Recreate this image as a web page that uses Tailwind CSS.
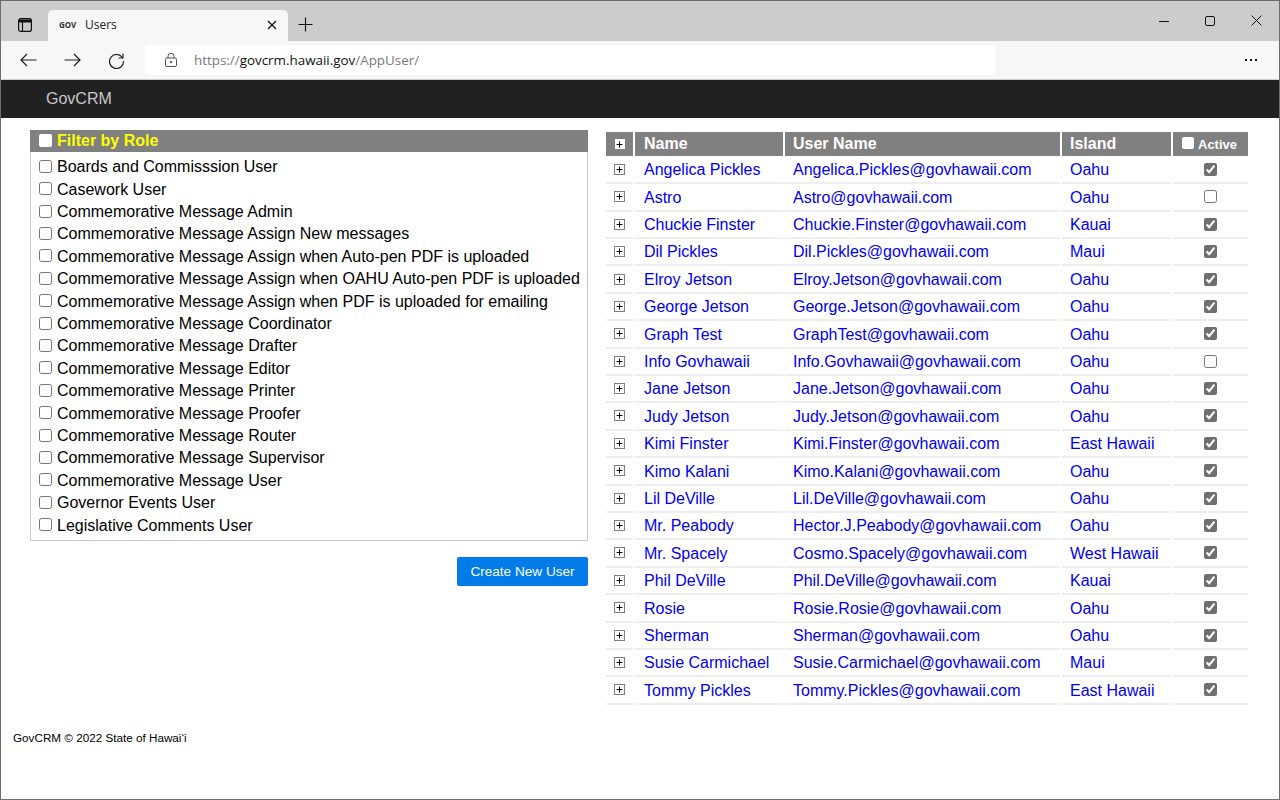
<!DOCTYPE html>
<html lang="en">
    <head>
        <meta charset="UTF-8" />
        <title>Users</title>
        <script src="https://cdn.jsdelivr.net/npm/@tailwindcss/browser@4"></script>
    </head>
    <body class="bg-white overflow-hidden font-['Liberation_Sans',Arial,sans-serif]">
        <div class="w-[1280px] h-[800px] border border-[#6e6e6e] flex flex-col text-black">
            <!-- Browser tab strip -->
            <div class="h-[40px] bg-[#cccccc] flex items-end relative shrink-0">
                <div class="w-[47px] h-[31px] flex items-center justify-center pb-[1px]">
                    <svg width="16" height="16" viewBox="0 0 16 16" fill="none" stroke="#111" stroke-width="1.2"><rect x="1.6" y="1.6" width="12.8" height="12.8" rx="2.2"/><path d="M1.6 5h12.8M5.5 5v9.4"/><path d="M2 2.5h12v2.5H2z" fill="#111" stroke="none"/></svg>
                </div>
                <div class="w-[240px] h-[31px] bg-[#f7f7f7] rounded-t-[5px] flex items-center pl-[11px] pr-[11px] pb-[1px]">
                    <span class="text-[8px] font-bold text-[#333] w-[26px] font-['Noto_Sans',sans-serif]">GOV</span>
                    <span class="text-[12px] text-[#222] font-['Open_Sans',sans-serif]">Users</span>
                    <svg class="ml-auto" width="10" height="10" viewBox="0 0 10 10" stroke="#111" stroke-width="1.3"><path d="M1 1l8 8M9 1l-8 8"/></svg>
                </div>
                <div class="w-[35px] h-[31px] flex items-center justify-center pb-[2px]">
                    <svg width="15" height="15" viewBox="0 0 15 15" stroke="#111" stroke-width="1.1"><path d="M7.5 0.5v14M0.5 7.5h14"/></svg>
                </div>
                <div class="ml-auto flex items-center h-[40px] pb-[1px]">
                    <svg class="mr-[36px]" width="10" height="10" viewBox="0 0 10 10" stroke="#111" stroke-width="1"><path d="M0 5.5h10"/></svg>
                    <svg class="mr-[36px]" width="10" height="10" viewBox="0 0 10 10" fill="none" stroke="#111" stroke-width="1"><rect x="0.5" y="0.5" width="9" height="9" rx="1.5"/></svg>
                    <svg class="mr-[17px]" width="11" height="11" viewBox="0 0 11 11" stroke="#111" stroke-width="1"><path d="M0.5 0.5l10 10M10.5 0.5l-10 10"/></svg>
                </div>
            </div>
            <!-- Browser toolbar -->
            <div class="h-[39px] bg-[#f7f7f7] border-b border-[#cfcfcf] flex items-center shrink-0">
                <div class="w-[144px] flex items-center pl-[19px] gap-[27px]">
                    <svg width="17" height="14" viewBox="0 0 17 14" fill="none" stroke="#222" stroke-width="1.2"><path d="M16.5 7H1M7 1L1 7l6 6"/></svg>
                    <svg width="17" height="14" viewBox="0 0 17 14" fill="none" stroke="#222" stroke-width="1.2"><path d="M0.5 7H16M10 1l6 6-6 6"/></svg>
                    <svg width="17" height="17" viewBox="0 0 17 17" fill="none" stroke="#222" stroke-width="1.2"><path d="M14.6 6A7 7 0 1 0 15.5 9"/><path d="M15 1.5V6h-4.5"/></svg>
                </div>
                <div class="w-[850px] h-[30px] bg-white rounded-[4px] flex items-center pl-[20px] text-[13.4px] font-['Open_Sans',sans-serif] text-[#7a7a7a]">
                    <svg class="mr-[17px]" width="12" height="14" viewBox="0 0 12 14" fill="none" stroke="#555" stroke-width="1"><rect x="0.5" y="5" width="11" height="8.5" rx="1.5"/><path d="M3 5V3.2a3 3 0 0 1 6 0V5"/><circle cx="6" cy="9.2" r="0.8" fill="#555"/></svg>
                    <span>https://</span><span class="text-[#111]">govcrm.hawaii.gov</span><span>/AppUser/</span>
                </div>
                <div class="ml-auto mr-[22px] flex gap-[3px]">
                    <span class="w-[2px] h-[2px] bg-[#111]"></span><span class="w-[2px] h-[2px] bg-[#111]"></span><span class="w-[2px] h-[2px] bg-[#111]"></span>
                </div>
            </div>
            <!-- Navbar -->
            <div class="h-[38px] bg-[#212121] flex items-center pl-[45px] text-[16px] text-white/75 shrink-0">GovCRM</div>

            <!-- Page -->
            <div class="flex items-start pl-[29px] pt-[12px]">
                <!-- Role filter -->
                <div class="w-[558px]">
                    <div class="h-[22px] bg-[#808080] flex items-center pl-[9px] gap-[5px] text-[16px] font-bold">
                        <input type="checkbox" class="m-0 w-[13px] h-[13px] appearance-none bg-white rounded-[2px] -mt-[1px]" />
                        <span class="text-[#ffff00]">Filter by Role</span>
                    </div>
                    <div id="roles" class="border border-t-0 border-[#cccccc] h-[389px] pl-[8px] pt-[4px] text-[16px]"></div>
                    <div class="flex justify-end mt-[16px]">
                        <button class="h-[29px] w-[131px] bg-[#007be8] rounded-[2px] text-white text-[13.6px] pt-[1px]">Create New User</button>
                    </div>
                </div>
                <!-- Users table -->
                <div class="ml-[18px] mt-[2px] w-[642px]">
                    <div class="grid grid-cols-[27px_148px_275px_109px_75px] gap-x-[2px] h-[24px] text-white font-bold text-[16px]">
                        <div class="bg-[#808080] flex items-center justify-center">
                            <span class="w-[10px] h-[10px] bg-white flex items-center justify-center"><svg width="7" height="7" viewBox="0 0 7 7" stroke="#000" stroke-width="1"><path d="M3.5 0.5v6M0.5 3.5h6"/></svg></span>
                        </div>
                        <div class="bg-[#808080] flex items-center pl-[9px]">Name</div>
                        <div class="bg-[#808080] flex items-center pl-[8px]">User Name</div>
                        <div class="bg-[#808080] flex items-center pl-[8px]">Island</div>
                        <div class="bg-[#808080] flex items-center pl-[9px] gap-[4px] text-[13px]">
                            <input type="checkbox" class="m-0 w-[12px] h-[12px] appearance-none bg-white rounded-[2px] -mt-[3px]" />
                            <span class="mt-[1px]">Active</span>
                        </div>
                    </div>
                    <div id="users"></div>
                </div>
            </div>

            <div class="pl-[12px] mt-[25px] text-[11.7px]" id="footer">GovCRM © 2022 State of Hawaiʻi</div>
        </div>

        <script>
            const roles = [
                "Boards and Commisssion User",
                "Casework User",
                "Commemorative Message Admin",
                "Commemorative Message Assign New messages",
                "Commemorative Message Assign when Auto-pen PDF is uploaded",
                "Commemorative Message Assign when OAHU Auto-pen PDF is uploaded",
                "Commemorative Message Assign when PDF is uploaded for emailing",
                "Commemorative Message Coordinator",
                "Commemorative Message Drafter",
                "Commemorative Message Editor",
                "Commemorative Message Printer",
                "Commemorative Message Proofer",
                "Commemorative Message Router",
                "Commemorative Message Supervisor",
                "Commemorative Message User",
                "Governor Events User",
                "Legislative Comments User",
            ];
            document.getElementById("roles").innerHTML = roles
                .map(
                    (r) => `<div class="h-[22.42px] flex items-center gap-[5px] whitespace-nowrap">
                        <input type="checkbox" class="m-0 w-[13px] h-[13px] -mt-[2px]" /><span>${r}</span></div>`
                )
                .join("");

            const users = [
                ["Angelica Pickles", "Angelica.Pickles@govhawaii.com", "Oahu", 1],
                ["Astro", "Astro@govhawaii.com", "Oahu", 0],
                ["Chuckie Finster", "Chuckie.Finster@govhawaii.com", "Kauai", 1],
                ["Dil Pickles", "Dil.Pickles@govhawaii.com", "Maui", 1],
                ["Elroy Jetson", "Elroy.Jetson@govhawaii.com", "Oahu", 1],
                ["George Jetson", "George.Jetson@govhawaii.com", "Oahu", 1],
                ["Graph Test", "GraphTest@govhawaii.com", "Oahu", 1],
                ["Info Govhawaii", "Info.Govhawaii@govhawaii.com", "Oahu", 0],
                ["Jane Jetson", "Jane.Jetson@govhawaii.com", "Oahu", 1],
                ["Judy Jetson", "Judy.Jetson@govhawaii.com", "Oahu", 1],
                ["Kimi Finster", "Kimi.Finster@govhawaii.com", "East Hawaii", 1],
                ["Kimo Kalani", "Kimo.Kalani@govhawaii.com", "Oahu", 1],
                ["Lil DeVille", "Lil.DeVille@govhawaii.com", "Oahu", 1],
                ["Mr. Peabody", "Hector.J.Peabody@govhawaii.com", "Oahu", 1],
                ["Mr. Spacely", "Cosmo.Spacely@govhawaii.com", "West Hawaii", 1],
                ["Phil DeVille", "Phil.DeVille@govhawaii.com", "Kauai", 1],
                ["Rosie", "Rosie.Rosie@govhawaii.com", "Oahu", 1],
                ["Sherman", "Sherman@govhawaii.com", "Oahu", 1],
                ["Susie Carmichael", "Susie.Carmichael@govhawaii.com", "Maui", 1],
                ["Tommy Pickles", "Tommy.Pickles@govhawaii.com", "East Hawaii", 1],
            ];
            const cell = "border-b-2 border-[#eeeeee] flex items-center pt-[2.3px] pl-[8px] text-[16px] text-[#0000ee]";
            document.getElementById("users").innerHTML = users
                .map(
                    (u) => `<div class="grid grid-cols-[27px_148px_275px_109px_75px] gap-x-[2px] h-[27.4px]">
                        <div class="border-b-2 border-[#eeeeee] flex items-center justify-center pt-[0.6px]"><span class="w-[11px] h-[11px] bg-white border border-[#808080] flex items-center justify-center"><svg width="7" height="7" viewBox="0 0 7 7" stroke="#000" stroke-width="1"><path d="M3.5 0.5v6M0.5 3.5h6"/></svg></span></div>
                        <div class="${cell} pl-[9px]">${u[0]}</div>
                        <div class="${cell}">${u[1]}</div>
                        <div class="${cell}">${u[2]}</div>
                        <div class="border-b-2 border-[#eeeeee] flex items-center justify-center pt-[0.6px]"><input type="checkbox" ${u[3] ? "checked" : ""} class="m-0 w-[13px] h-[13px] accent-[#6f6f6f]" /></div>
                    </div>`
                )
                .join("");
        </script>
    </body>
</html>
